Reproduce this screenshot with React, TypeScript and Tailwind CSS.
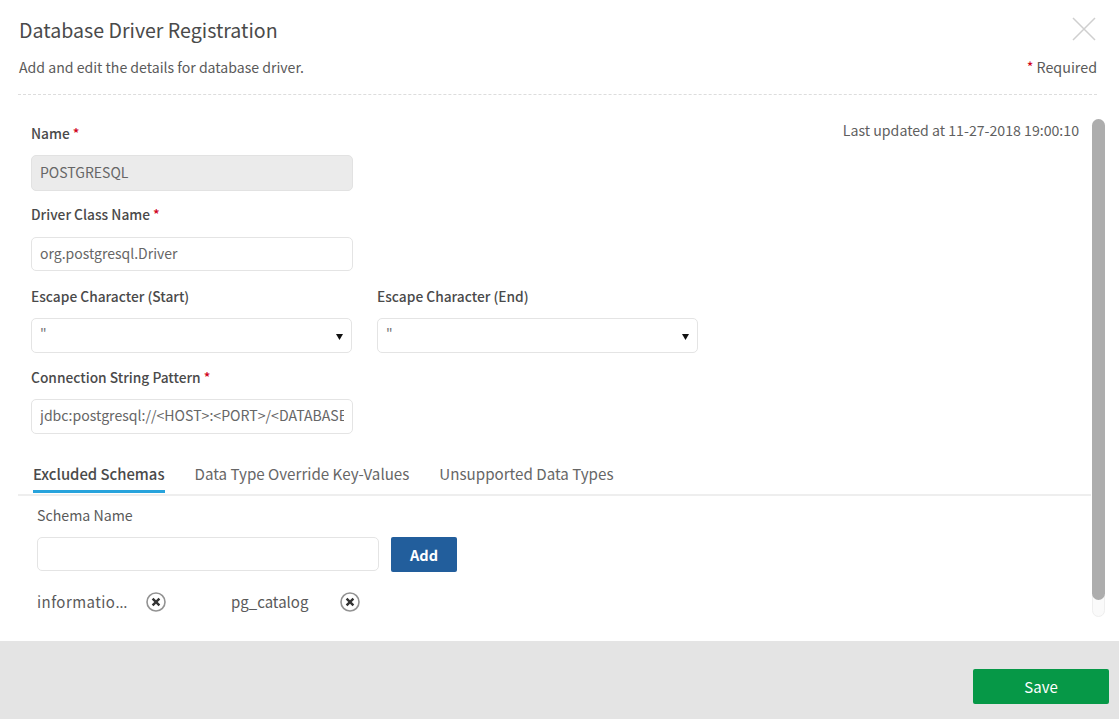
const font = { fontFamily: '"Noto Sans CJK SC", "Noto Sans", sans-serif' };

function Req() {
  return <span className="text-[#d0021b] ml-[3px]">*</span>;
}

function Label({ text, required, cls }: { text: string; required?: boolean; cls: string }) {
  return (
    <div className={"h-[20px] leading-[18px] text-[13.75px] font-medium text-[#4a4a4a] whitespace-nowrap " + cls}>
      {text}
      {required && <Req />}
    </div>
  );
}

function Select() {
  return (
    <div className="w-[321px] h-[35px] border border-[#e4e4e4] rounded-[5px] bg-white flex items-center justify-between pl-[8px] pr-[8px]">
      <span className="text-[#777777] text-[14px] leading-[20px] -mt-[5px]">"</span>
      <svg width="7" height="7" viewBox="0 0 8 8" className="mt-[1px]">
        <path d="M0 1H8L4 8Z" fill="#111" />
      </svg>
    </div>
  );
}

function RemoveIcon() {
  return (
    <svg width="20" height="20" viewBox="0 0 20 20" className="block">
      <circle cx="10" cy="10" r="9" fill="#fff" stroke="#929292" strokeWidth="1.6" />
      <path d="M6.6 6.6L13.4 13.4M13.4 6.6L6.6 13.4" stroke="#333" strokeWidth="2.4" />
    </svg>
  );
}

export default function App() {
  return (
    <div style={font} className="w-[1119px] h-[719px] bg-white flex flex-col overflow-hidden text-[#555555]">
      <header className="h-[95px] ml-[18px] mr-[22px] shrink-0 border-b border-dashed border-[#dddddd] flex justify-between">
        <div className="flex flex-col">
          <h1 className="text-[19.6px] leading-[26px] font-normal text-[#4a4a4a] mt-[17px] ml-[1px] whitespace-nowrap">Database Driver Registration</h1>
          <p className="text-[14.1px] leading-[20px] text-[#5a5a5a] mt-[14px] ml-[1px] whitespace-nowrap">Add and edit the details for database driver.</p>
        </div>
        <div className="flex flex-col items-end">
          <svg width="26" height="26" viewBox="0 0 26 26" className="mt-[16px]">
            <path d="M2 2L24 24M24 2L2 24" stroke="#cfcfcf" strokeWidth="1.5" fill="none" />
          </svg>
          <p className="text-[14.3px] leading-[20px] text-[#5a5a5a] mt-[15px] whitespace-nowrap">
            <span className="text-[#d0021b] mr-[3px]">*</span>Required
          </p>
        </div>
      </header>

      <main className="flex-1 flex min-h-0">
        <div className="flex-1 pl-[18px] min-w-0">
          <div className="flex justify-between pl-[13px] pr-[12px]">
            <div className="pt-[29px]">
              <Label text="Name" required cls="mb-[11px]" />
              <div className="w-[322px] h-[36px] rounded-[5px] bg-[#ebebeb] border border-[#e2e2e2] px-[8px] pb-[1px] flex items-center text-[14px] text-[#666666]">POSTGRESQL</div>
            </div>
            <p className="text-[14.15px] leading-[20px] text-[#5f5f5f] mt-[25px] whitespace-nowrap">Last updated at 11-27-2018 19:00:10</p>
          </div>

          <div className="pl-[13px]">
            <Label text="Driver Class Name" required cls="mt-[14px] mb-[12px]" />
            <div className="w-[322px] h-[34px] rounded-[5px] border border-[#e4e4e4] px-[8px] pb-[1px] flex items-center text-[14px] text-[#666666]">org.postgresql.Driver</div>

            <div className="flex gap-[25px] mt-[16px]">
              <div>
                <Label text="Escape Character (Start)" cls="mb-[11px]" />
                <Select />
              </div>
              <div>
                <Label text="Escape Character (End)" cls="mb-[11px]" />
                <Select />
              </div>
            </div>

            <Label text="Connection String Pattern" required cls="mt-[15px] mb-[11px]" />
            <div className="w-[322px] h-[35px] rounded-[5px] border border-[#e4e4e4] pl-[8px] pr-[8px] pb-[1px] flex items-center text-[14.1px] text-[#666666] overflow-hidden">
              <span className="block w-full overflow-hidden whitespace-nowrap">{"jdbc:postgresql://<HOST>:<PORT>/<DATABASE>"}</span>
            </div>
          </div>

          <nav className="mt-[22px] h-[40px] border-b-2 border-[#eeeeee] flex items-start pl-[15px] gap-[30px] text-[15.15px] leading-[20px] text-[#666666]">
            <div className="relative h-[38px] pt-[8px] text-[14.85px] font-medium text-[#4a4a4a] whitespace-nowrap">
              Excluded Schemas
              <div className="absolute left-0 right-0 bottom-[1px] h-[3px] bg-[#27a3dc]" />
            </div>
            <div className="pt-[7px] whitespace-nowrap">Data Type Override Key-Values</div>
            <div className="pt-[7px] whitespace-nowrap">Unsupported Data Types</div>
          </nav>

          <section className="pl-[19px]">
            <div className="text-[14.2px] leading-[20px] text-[#5a5a5a] mt-[9px]">Schema Name</div>
            <div className="flex items-start gap-[12px] mt-[12px]">
              <div className="w-[342px] h-[34px] rounded-[5px] border border-[#e4e4e4]" />
              <button className="w-[66px] h-[35px] rounded-[2px] bg-[#225e9c] text-white text-[14.5px] font-bold">Add</button>
            </div>
            <div className="flex items-center mt-[20px] h-[20px] text-[15px] text-[#5a5a5a]">
              <span className="w-[92px] whitespace-nowrap tracking-[0.45px]">informatio<span className="font-['Noto_Sans']">…</span></span>
              <span className="ml-[17px]"><RemoveIcon /></span>
              <span className="ml-[65px] w-[79px] whitespace-nowrap">pg_catalog</span>
              <span className="ml-[30px]"><RemoveIcon /></span>
            </div>
          </section>
        </div>

        <div className="w-[13px] shrink-0 ml-[1px] mr-[14px] mt-[24px] mb-[24px] rounded-[7px] border border-[#eeeeee] bg-[#fafafa] relative">
          <div className="absolute -left-[1px] -right-[1px] -top-[1px] h-[481px] rounded-[7px] bg-[#adadad]" />
        </div>
      </main>

      <footer className="h-[78px] shrink-0 bg-[#e4e4e4] flex justify-end items-start pt-[28px] pr-[10px]">
        <button className="w-[136px] h-[35px] pt-[1px] rounded-[2px] bg-[#069847] text-white text-[15px]">Save</button>
      </footer>
    </div>
  );
}
